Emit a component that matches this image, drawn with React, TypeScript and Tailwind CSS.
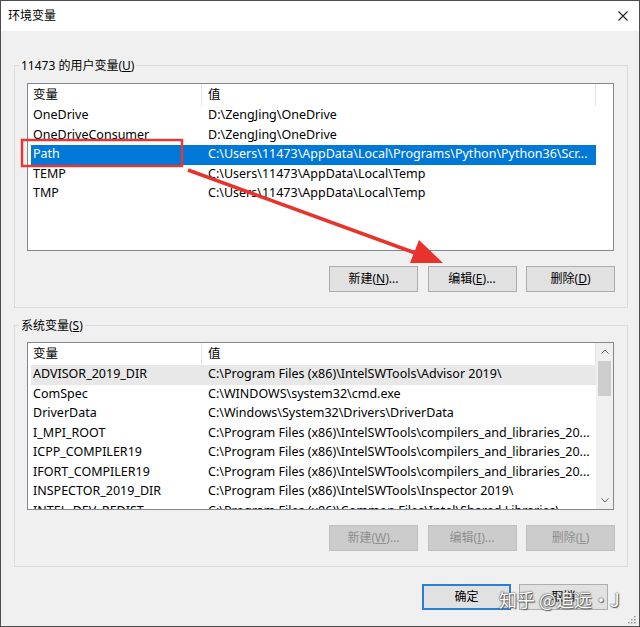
import React from "react";

type RowProps = { name: string; value: string; selected?: boolean; hover?: boolean };

function Row({ name, value, selected, hover }: RowProps) {
  const hl = selected ? "bg-[#0078d7] text-white" : hover ? "bg-[#e8e8e8]" : "";
  return (
    <div className="flex h-[19.5px] items-center">
      <div className={`ml-[3px] flex h-full w-[565px] items-center ${hl}`}>
        <div className="w-[171px] overflow-hidden whitespace-nowrap pl-[2px]">{name}</div>
        <div className="w-[394px] overflow-hidden whitespace-nowrap pl-[6px]">{value}</div>
      </div>
    </div>
  );
}

function Header() {
  return (
    <div className="flex h-[22px] items-center">
      <div className="flex h-full w-[174px] items-center border-r border-[#e5e5e5] pl-[5px]">变量</div>
      <div className="flex h-full w-[394px] items-center border-r border-[#e5e5e5] pl-[6px]">值</div>
    </div>
  );
}

type BtnProps = { label: string; u?: string; tail?: string; disabled?: boolean; def?: boolean };

function Btn({ label, u, tail, disabled, def }: BtnProps) {
  const cls = disabled
    ? "border border-[#bfbfbf] bg-[#cccccc] text-[#8f8f8f]"
    : def
    ? "border-2 border-[#2a7fd4] bg-[#e1e1e1] text-black"
    : "border border-[#adadad] bg-[#e1e1e1] text-black";
  return (
    <div className={`flex h-[26px] w-[89px] items-center justify-center text-[12px] ${cls}`}>
      <span>
        {label}
        {u ? (
          <>
            (<span className="underline">{u}</span>){tail}
          </>
        ) : null}
      </span>
    </div>
  );
}

const userVars: RowProps[] = [
  { name: "OneDrive", value: "D:\\ZengJing\\OneDrive" },
  { name: "OneDriveConsumer", value: "D:\\ZengJing\\OneDrive" },
  {
    name: "Path",
    value: "C:\\Users\\11473\\AppData\\Local\\Programs\\Python\\Python36\\Scr...",
    selected: true,
  },
  { name: "TEMP", value: "C:\\Users\\11473\\AppData\\Local\\Temp" },
  { name: "TMP", value: "C:\\Users\\11473\\AppData\\Local\\Temp" },
];

const sysVars: RowProps[] = [
  { name: "ADVISOR_2019_DIR", value: "C:\\Program Files (x86)\\IntelSWTools\\Advisor 2019\\", hover: true },
  { name: "ComSpec", value: "C:\\WINDOWS\\system32\\cmd.exe" },
  { name: "DriverData", value: "C:\\Windows\\System32\\Drivers\\DriverData" },
  { name: "I_MPI_ROOT", value: "C:\\Program Files (x86)\\IntelSWTools\\compilers_and_libraries_20..." },
  { name: "ICPP_COMPILER19", value: "C:\\Program Files (x86)\\IntelSWTools\\compilers_and_libraries_20..." },
  { name: "IFORT_COMPILER19", value: "C:\\Program Files (x86)\\IntelSWTools\\compilers_and_libraries_20..." },
  { name: "INSPECTOR_2019_DIR", value: "C:\\Program Files (x86)\\IntelSWTools\\Inspector 2019\\" },
  { name: "INTEL_DEV_REDIST", value: "C:\\Program Files (x86)\\Common Files\\Intel\\Shared Libraries\\" },
];

export default function App() {
  return (
    <div className="relative h-[627px] w-[640px] overflow-hidden border border-[#4d4d4d] bg-[#f0f0f0] font-['Noto_Sans','Noto_Sans_CJK_SC',sans-serif] text-[12.5px] text-black">
      {/* Title bar */}
      <div className="flex h-[30px] items-center justify-between bg-white pl-[7px] pr-[11px]">
        <span className="text-[12px]">环境变量</span>
        <svg width="10" height="10" viewBox="0 0 10 10">
          <path d="M0.5 0.5 L9.5 9.5 M9.5 0.5 L0.5 9.5" stroke="#222" strokeWidth="1.1" fill="none" />
        </svg>
      </div>

      {/* Body */}
      <div className="pl-[13px] pr-[11px] pt-[26px]">
        {/* User variables */}
        <fieldset className="m-0 w-[614px] border border-[#dcdcdc] p-0">
          <legend className="ml-[4px] px-[2px] text-[12px] leading-[17px]">
            11473 的用户变量(<span className="underline">U</span>)
          </legend>
          <div className="px-[12px] pb-[15px] pt-[9px]">
            <div className="h-[168px] w-[587px] overflow-hidden border border-[#828790] bg-white">
              <Header />
              {userVars.map((r) => (
                <Row key={r.name} {...r} />
              ))}
            </div>
            <div className="mt-[15px] flex justify-end gap-[9.5px]">
              <Btn label="新建" u="N" tail="..." />
              <Btn label="编辑" u="E" tail="..." />
              <Btn label="删除" u="D" />
            </div>
          </div>
        </fieldset>

        {/* System variables */}
        <fieldset className="m-0 mt-[9px] w-[614px] border border-[#dcdcdc] p-0">
          <legend className="ml-[4px] px-[2px] text-[12px] leading-[17px]">
            系统变量(<span className="underline">S</span>)
          </legend>
          <div className="px-[12px] pb-[15px] pt-[8px]">
            <div className="flex h-[168px] w-[587px] overflow-hidden border border-[#828790] bg-white">
              <div className="w-[568px] overflow-hidden">
                <Header />
                {sysVars.map((r) => (
                  <Row key={r.name} {...r} />
                ))}
              </div>
              <div className="flex w-[17px] flex-col bg-[#f0f0f0]">
                <div className="flex h-[17px] items-center justify-center">
                  <svg width="8" height="5" viewBox="0 0 8 5">
                    <path d="M0.5 4.5 L4 1 L7.5 4.5" stroke="#606060" strokeWidth="1" fill="none" />
                  </svg>
                </div>
                <div className="mx-[2px] mt-[1px] h-[35px] bg-[#cdcdcd]" />
                <div className="flex-1" />
                <div className="flex h-[17px] items-center justify-center">
                  <svg width="8" height="5" viewBox="0 0 8 5">
                    <path d="M0.5 0.5 L4 4 L7.5 0.5" stroke="#606060" strokeWidth="1" fill="none" />
                  </svg>
                </div>
              </div>
            </div>
            <div className="mt-[15px] flex justify-end gap-[9.5px]">
              <Btn label="新建" u="W" tail="..." disabled />
              <Btn label="编辑" u="I" tail="..." disabled />
              <Btn label="删除" u="L" disabled />
            </div>
          </div>
        </fieldset>

        {/* Dialog buttons */}
        <div className="mt-[17px] flex justify-end gap-[8px] pr-[20px]">
          <Btn label="确定" def />
          <Btn label="取消" />
        </div>
      </div>

      {/* Annotation overlay: red box and arrow */}
      <svg className="pointer-events-none absolute left-[-1px] top-[-1px]" width="640" height="627">
        <rect x="22" y="140" width="160" height="26" fill="none" stroke="#e0393a" strokeWidth="2.5" />
        <line x1="188" y1="170" x2="418" y2="254" stroke="#e8332c" strokeWidth="3.5" />
        <polygon points="443,263 410,263 419,240" fill="#e8332c" />
      </svg>

      {/* Watermark */}
      <div className="pointer-events-none absolute left-[498px] top-[587px] whitespace-nowrap font-['Noto_Sans_CJK_SC',sans-serif] text-[18px] leading-[22px] text-white [text-shadow:0_0_1px_#444,0_0_2px_#555,1px_1px_1px_#666]">
        知乎 @追远·J
      </div>

      {/* Resize grip */}
      <svg className="pointer-events-none absolute bottom-[2px] right-[3px]" width="8" height="8" viewBox="0 0 8 8">
        <rect x="6" y="0" width="1.5" height="1.5" fill="#999" />
        <rect x="3" y="3" width="1.5" height="1.5" fill="#999" />
        <rect x="6" y="3" width="1.5" height="1.5" fill="#999" />
        <rect x="0" y="6" width="1.5" height="1.5" fill="#999" />
        <rect x="3" y="6" width="1.5" height="1.5" fill="#999" />
        <rect x="6" y="6" width="1.5" height="1.5" fill="#999" />
      </svg>
    </div>
  );
}
